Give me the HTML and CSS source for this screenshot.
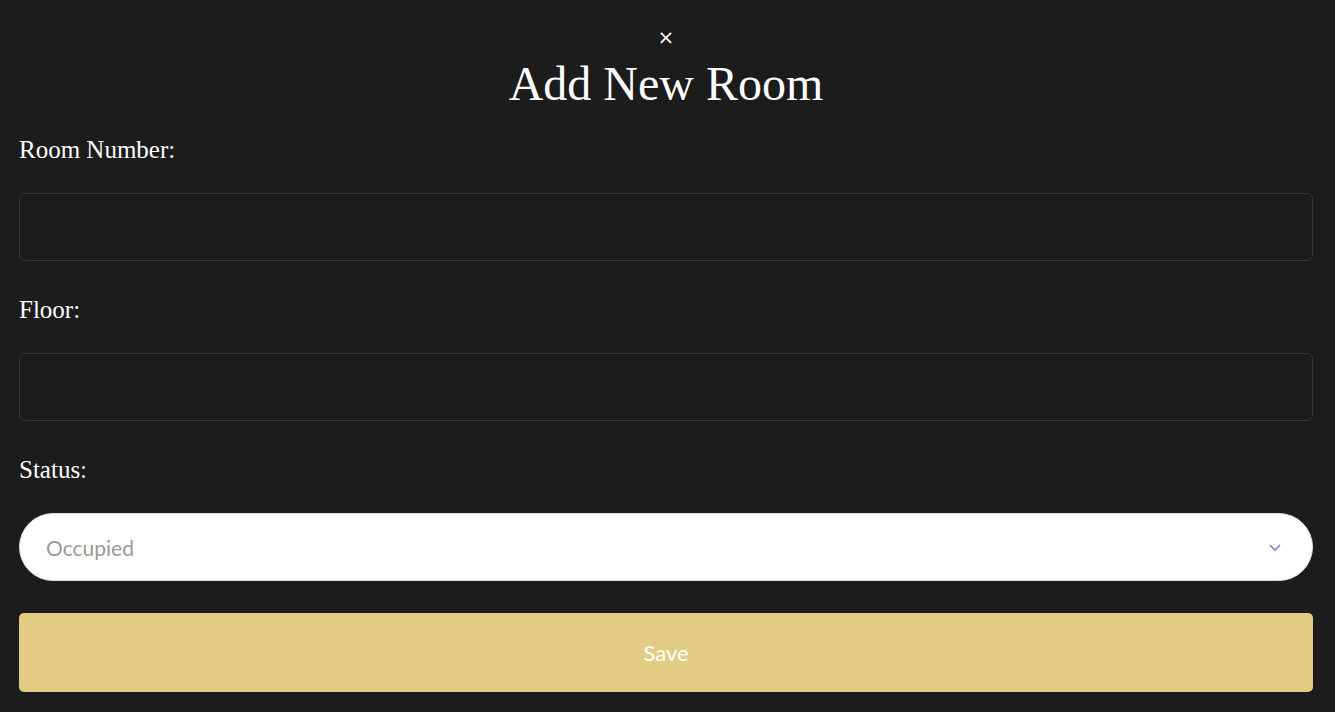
FILE: index.html
```html
<!DOCTYPE html>
<html lang="en">
<head>
<meta charset="utf-8">
<title>Add New Room</title>
<link rel="stylesheet" href="styles.css">
</head>
<body>
<div class="modal">
  <div class="modal-head">
    <button class="close" type="button" aria-label="Close">&times;</button>
    <h1 class="title">Add New Room</h1>
  </div>
  <form class="form">
    <div class="field">
      <label class="label" for="room">Room Number:</label>
      <input class="input" id="room" type="text">
    </div>
    <div class="field">
      <label class="label" for="floor">Floor:</label>
      <input class="input" id="floor" type="text">
    </div>
    <div class="field">
      <label class="label" for="status">Status:</label>
      <div class="select">
        <span class="select-value">Occupied</span>
        <svg class="chevron" width="14" height="9" viewBox="0 0 14 9"><path d="M2 2 L7 7 L12 2" fill="none" stroke="#8a7fc0" stroke-width="1.6"/></svg>
      </div>
    </div>
    <button class="save" type="button">Save</button>
  </form>
</div>
</body>
</html>
```

FILE: styles.css
```css
* { box-sizing: border-box; }
html, body { margin: 0; padding: 0; }
body {
  background: #1c1c1c;
  color: #fff;
  font-family: "Liberation Serif", "DejaVu Serif", serif;
  height: 712px;
  overflow: hidden;
}
.modal {
  padding: 23px 22px 0 19px;
}
.modal-head {
  display: flex;
  flex-direction: column;
  align-items: center;
}
.close {
  background: none;
  border: none;
  color: #fff;
  font-family: "DejaVu Sans", sans-serif;
  font-size: 20px;
  line-height: 28px;
  padding: 0;
  cursor: pointer;
}
.title {
  margin: 5px 0 0;
  font-weight: 400;
  font-size: 48px;
  line-height: 56px;
}
.form {
  display: flex;
  flex-direction: column;
  margin-top: 24px;
}
.field {
  display: flex;
  flex-direction: column;
  margin-bottom: 35px;
}
.field:last-of-type {
  margin-bottom: 32px;
}
.label {
  font-size: 25px;
  line-height: 28px;
  margin-bottom: 29px;
}
.input {
  height: 68px;
  background: #1c1c1c;
  border: 1px solid #363636;
  border-radius: 6px;
  color: #fff;
}
.select {
  height: 68px;
  background: #fff;
  border-radius: 34px;
  border: 1px solid #e8dcc8;
  display: flex;
  align-items: center;
  justify-content: space-between;
  padding: 0 30px 0 26px;
}
.select-value {
  font-family: "Lato", "Noto Sans", sans-serif;
  font-size: 21px;
  color: #9a9a9a;
}
.save {
  height: 79px;
  background: #e2cc83;
  border: none;
  border-radius: 5px;
  color: #fff;
  font-family: "Lato", "Noto Sans", sans-serif;
  font-size: 22px;
}
```
